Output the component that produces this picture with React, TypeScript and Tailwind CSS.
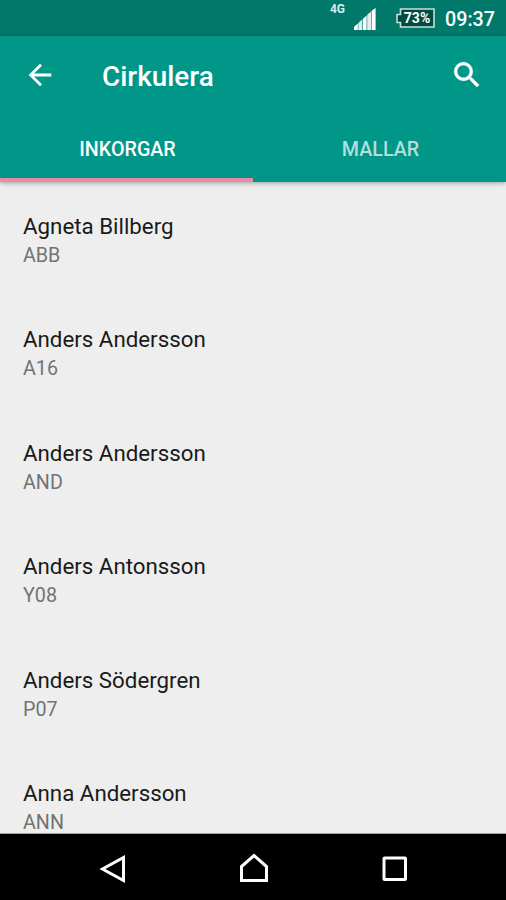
import clsx from 'clsx'

interface Contact {
  name: string
  code: string
}

const CONTACTS: Contact[] = [
  { name: 'Agneta Billberg', code: 'ABB' },
  { name: 'Anders Andersson', code: 'A16' },
  { name: 'Anders Andersson', code: 'AND' },
  { name: 'Anders Antonsson', code: 'Y08' },
  { name: 'Anders Södergren', code: 'P07' },
  { name: 'Anna Andersson', code: 'ANN' },
]

const TABS = ['INKORGAR', 'MALLAR']

function StatusBar() {
  return (
    <div className="flex h-9 shrink-0 items-start justify-end bg-[#00796b] pr-[11px] text-white">
      <span className="mt-[3px] text-[12px] leading-3 font-bold text-[#d9efec]">4G</span>
      <svg className="mt-2 ml-[9px] h-[22px] w-[22px]" viewBox="0 0 22 22">
        <path d="M0 22v-3l3.8-3.6V22z" fill="#fff" />
        <path d="M4.300 22v-6.900L8.200 11.400V22z" fill="#e4efed" />
        <path d="M8.800 22V11l3.800-3.600V22z" fill="#fff" />
        <path d="M13.200 22V6.800l3.800-3.400V22z" fill="#e4efed" />
        <path d="M17.600 22V2.700L21.600 0v22z" fill="#fff" />
      </svg>
      <div className="relative mt-2 ml-[20px] h-5 w-[39px]">
        <svg className="absolute inset-0" width="39" height="20" viewBox="0 0 39 20">
          <path d="M4.500 1H38v18H4.500v-4.500H1v-8h3.500z" fill="#004d40" stroke="#c5deda" strokeWidth="1.6" />
        </svg>
        <span className="absolute inset-0 pl-[3px] text-center text-[14px] leading-5 font-bold">73%</span>
      </div>
      <span className="mt-[8px] ml-[10px] text-[19.7px] leading-6 font-medium">09:37</span>
    </div>
  )
}

function AppBar() {
  return (
    <div className="flex h-[79px] shrink-0 items-center pr-[22px] pl-[23px] text-white">
      <svg className="-mt-0.5 size-[34px]" viewBox="0 0 24 24" fill="currentColor">
        <path d="M20 11H7.83l5.59-5.59L12 4l-8 8 8 8 1.41-1.41L7.83 13H20v-2z" />
      </svg>
      <h1 className="mt-0.5 ml-[45px] flex-1 text-[27.9px] leading-8 font-medium">Cirkulera</h1>
      <svg className="-mt-0.5 size-[34px]" viewBox="0 0 24 24" fill="currentColor" stroke="currentColor" strokeWidth="0.4">
        <path d="M15.5 14h-.79l-.28-.27A6.471 6.471 0 0 0 16 9.5 6.5 6.5 0 1 0 9.5 16c1.61 0 3.09-.59 4.23-1.57l.27.28v.79l5 4.99L20.49 19l-4.99-5zm-6 0C7.01 14 5 11.99 5 9.5S7.01 5 9.5 5 14 7.01 14 9.5 11.99 14 9.5 14z" />
      </svg>
    </div>
  )
}

function TabBar() {
  return (
    <div className="grid h-[67px] shrink-0 grid-cols-2">
      {TABS.map((tab, i) => (
        <div
          key={tab}
          className={clsx(
            'border-b-4 pt-[23px] pl-0.5 text-center text-[19.7px] leading-6 font-medium',
            i === 0 ? 'border-[#ea8aa8] text-white' : 'border-transparent text-[#b2dfdb]',
          )}
        >
          {tab}
        </div>
      ))}
    </div>
  )
}

function NavBar() {
  return (
    <div className="flex h-[66px] shrink-0 items-center justify-center gap-[107px] bg-black pt-1 pl-px text-white">
      <svg className="size-[34px]" viewBox="0 0 34 34" fill="none" stroke="currentColor" strokeWidth="3">
        <path d="M27.500 5.500v23L6.5 17z" />
      </svg>
      <svg className="size-[34px]" viewBox="0 0 34 34" fill="none" stroke="currentColor" strokeWidth="3">
        <path d="M4.5 28.500V14.5L17 3.500l12.500 11V28.500z" />
      </svg>
      <svg className="size-[34px]" viewBox="0 0 34 34" fill="none" stroke="currentColor" strokeWidth="3">
        <rect x="6" y="6" width="21.500" height="21.500" rx="0.500" />
      </svg>
    </div>
  )
}

export default function App() {
  return (
    <div className="flex h-[900px] w-[506px] flex-col overflow-hidden bg-[#eeeeee] font-['Roboto',sans-serif]">
      <StatusBar />
      <header className="z-10 shrink-0 bg-[#009688] shadow-[0_1px_5px_rgba(0,0,0,0.35)]">
        <AppBar />
        <TabBar />
      </header>
      <ul className="min-h-0 flex-1 overflow-hidden border-b border-[#a0a0a0] px-[23px] pt-[30px]">
        {CONTACTS.map((contact, i) => (
          <li key={i} className="h-[113.4px]">
            <p className="text-[22.3px] leading-7 text-[#1a1a1a]">{contact.name}</p>
            <p className="mt-0.5 text-[19.7px] leading-7 text-[#737373]">{contact.code}</p>
          </li>
        ))}
      </ul>
      <NavBar />
    </div>
  )
}
